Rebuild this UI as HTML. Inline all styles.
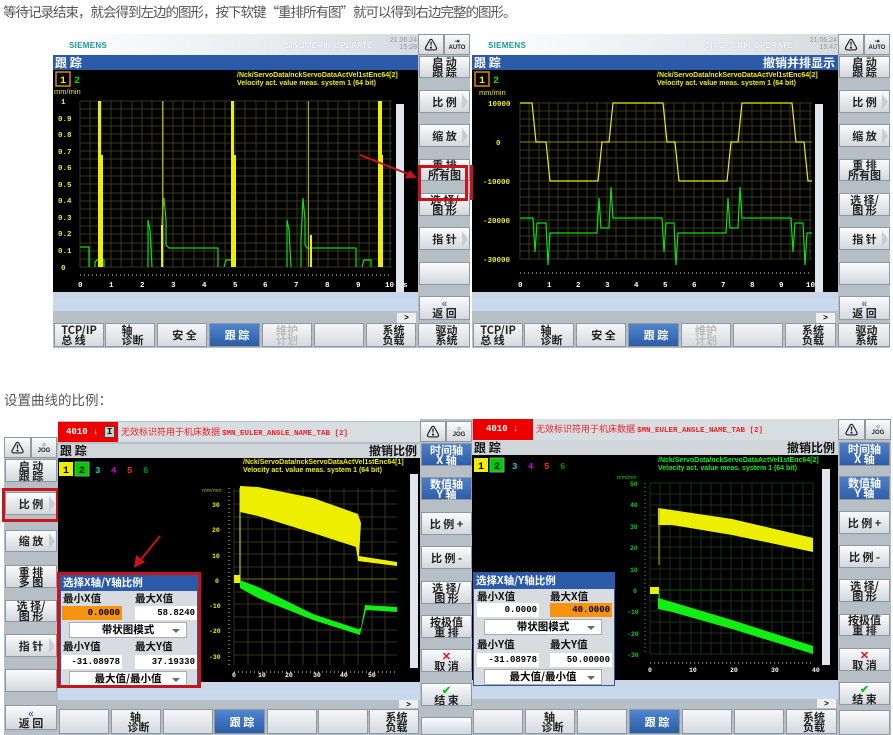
<!DOCTYPE html>
<html><head><meta charset="utf-8"><style>
*{margin:0;padding:0;box-sizing:border-box}
body{width:893px;height:735px;background:#fff;position:relative;overflow:hidden;font-family:"Liberation Sans","Noto Sans CJK SC",sans-serif}
.a{position:absolute}
.cap{position:absolute;font-size:13.5px;color:#555;white-space:nowrap;font-family:"Noto Sans CJK SC",sans-serif}
.hdr{background:linear-gradient(90deg,#fff 0%,#e8ecef 60%,#d5dbe0 100%)}
.sie{position:absolute;font:bold 8px "Liberation Sans",sans-serif;color:#1a9a9a;letter-spacing:.3px}
.so{position:absolute;font:8px "Liberation Sans",sans-serif;color:#fff;letter-spacing:.2px}
.dt{position:absolute;font:7px "Liberation Sans",sans-serif;color:#999;text-align:right;line-height:7px}
.col{position:absolute;background:#b6bec6}
.sk{position:absolute;background:linear-gradient(#fafbfc,#d3d8dd);border:1px solid #8f989f;font:bold 11px "Noto Sans CJK SC",sans-serif;color:#222;text-align:center;display:flex;align-items:center;justify-content:center;line-height:10px}
.skb{background:linear-gradient(#4f7fc8,#2f5ea8);color:#fff}
.tri{position:absolute;right:1px;top:50%;margin-top:-8px;width:0;height:0;border-left:6px solid #c7cdd3;border-top:8px solid transparent;border-bottom:8px solid transparent}
.blk{position:absolute;background:#000}
.ttl{position:absolute;background:#2b5aa8;color:#fff;font:bold 12px "Noto Sans CJK SC",sans-serif;padding-left:2px;line-height:15px}
.ttlg{background:#d0d5da;color:#111}
.bb{position:absolute;background:linear-gradient(#f5f6f7,#d6dbe0);border:1px solid #8f989f;font:bold 11px "Noto Sans CJK SC",sans-serif;color:#222;display:flex;align-items:center;justify-content:center;line-height:10px}
.bbb{background:linear-gradient(#4f86cf,#2c5ca6);color:#fff}
.path{position:absolute;font:bold 7px "Liberation Sans",sans-serif;color:#ee0;line-height:8px;white-space:nowrap}
.lbl{font:bold 7px "Liberation Mono",monospace}
.dlg{position:absolute;background:#d8dce0;border:1px solid #2b5aa8}
.dlg .h{background:#2b5aa8;color:#fff;font:bold 10.5px "Noto Sans CJK SC",sans-serif;height:16px;line-height:16px;padding-left:2px}
.dlg .t{position:absolute;font:bold 10.5px "Noto Sans CJK SC",sans-serif;color:#111}
.dlg .f{position:absolute;background:#fff;font:bold 9px "Liberation Mono",monospace;text-align:right;padding-right:2px;line-height:14px;height:14px}
.dlg .o{background:#f7940f}
.dlg .dd{position:absolute;background:#fff;border:1px solid #aab;font:bold 10.5px "Noto Sans CJK SC",sans-serif;text-align:center;line-height:14px;height:16px}
.dlg .dd:after{content:"";position:absolute;right:6px;top:6px;border-left:4px solid transparent;border-right:4px solid transparent;border-top:4px solid #667}
.alm{position:absolute;background:#e00;color:#fff;font:bold 9px "Liberation Mono",monospace;line-height:20px}
.almt{position:absolute;background:#d8dde2;color:#e22;font:9px "Noto Sans CJK SC",sans-serif;line-height:20px;white-space:nowrap}
</style></head><body>

<div class="cap" style="left:3px;top:1px;letter-spacing:-1px">等待记录结束，就会得到左边的图形，按下软键“重排所有图”就可以得到右边完整的图形。</div>
<div class="cap" style="left:4px;top:389px">设置曲线的比例：</div>

<!-- ============ PANEL 1 ============ -->
<div class="a hdr" style="left:53px;top:34px;width:365px;height:21px"></div>
<div class="sie" style="left:69px;top:41px">SIEMENS</div>
<div class="so" style="left:285px;top:41px;color:#fff;text-shadow:0 0 1px #aab">SINUMERIK OPERATE</div>
<div class="dt" style="left:380px;top:37px;width:37px">21.06.24<br>15:28</div>
<div class="ttl" style="left:53px;top:55px;width:365px;height:15px">跟 踪</div>
<div class="blk" style="left:53px;top:70px;width:365px;height:222px"></div>
<div class="a" style="left:53px;top:292px;width:365px;height:7px;background:#c9d6e8"></div>
<div class="a" style="left:53px;top:299px;width:365px;height:12px;background:#c8d9ee"></div>
<div class="a" style="left:53px;top:311px;width:365px;height:12px;background:#b6bec6"></div>
<div class="a" style="left:397px;top:313px;width:19px;height:10px;background:#eee;font:bold 8px sans-serif;text-align:center">&gt;</div>
<svg class="a" style="left:53px;top:70px" width="365" height="222">
 <rect x="3" y="2" width="14" height="14" fill="none" stroke="#e08a00" stroke-width="1.5"/>
 <text x="7" y="13" fill="#ee0" class="lbl" style="font-size:10px">1</text>
 <text x="21" y="13" fill="#0d0" class="lbl" style="font-size:10px">2</text>
 <text x="1" y="24" fill="#ee0" font-size="7.5" font-family="Liberation Sans">mm/min</text>
 <g stroke="#3a3a1c" stroke-width="1">
  <path d="M27 31V197M37 31V197M48 31V197M58 31V197M68 31V197M79 31V197M89 31V197M99 31V197M110 31V197M120 31V197M130 31V197M141 31V197M151 31V197M161 31V197M172 31V197M182 31V197M192 31V197M203 31V197M213 31V197M223 31V197M234 31V197M244 31V197M254 31V197M265 31V197M275 31V197M285 31V197M296 31V197M306 31V197M316 31V197M327 31V197M337 31V197"/>
  <path d="M27 31H339M27 39H339M27 48H339M27 56H339M27 64H339M27 73H339M27 81H339M27 89H339M27 98H339M27 106H339M27 114H339M27 123H339M27 131H339M27 139H339M27 148H339M27 156H339M27 164H339M27 173H339M27 181H339M27 189H339M27 197H339"/>
 </g>
 <g fill="#ee0" font-size="7.5" font-family="Liberation Mono" font-weight="bold">
  <text x="8" y="34">1</text><text x="5" y="51">0.9</text><text x="5" y="67">0.8</text><text x="5" y="84">0.7</text><text x="5" y="100">0.6</text><text x="5" y="117">0.5</text><text x="5" y="133">0.4</text><text x="5" y="150">0.3</text><text x="5" y="166">0.2</text><text x="5" y="183">0.1</text><text x="8" y="200">0</text>
 </g>
 <g fill="#fff" font-size="7.5" font-family="Liberation Mono" font-weight="bold">
  <text x="25" y="217">0</text><text x="56" y="217">1</text><text x="87" y="217">2</text><text x="118" y="217">3</text><text x="149" y="217">4</text><text x="180" y="217">5</text><text x="210" y="217">6</text><text x="241" y="217">7</text><text x="272" y="217">8</text><text x="303" y="217">9</text><text x="332" y="217">10</text><text x="350" y="217">s</text>
 </g>
 <path d="M27 205H339" stroke="#ee0" stroke-dasharray="1 3"/>
 <g stroke="#1d1" fill="none" stroke-width="1.2">
  <path d="M27 177H36V197M42 197V192L44 190H51V197"/>
  <path d="M95 197V150L97 160L99 197M109 197V150L111 128L113 150V175L116 178H165V197M171 197L173 190H180V197"/>
  <path d="M234 197V150L236 160L238 197M248 197V170L250 128L252 150V175L254 178H303V197M309 197L311 190H318V197"/>
 </g>
 <g fill="#ee0">
  <rect x="45" y="31" width="3" height="166"/><rect x="47" y="85" width="3" height="112"/>
  <rect x="109" y="31" width="1.5" height="166" fill="#aa0"/>
  <rect x="108" y="155" width="2" height="42"/>
  <rect x="178" y="31" width="3" height="166"/><rect x="180" y="85" width="3" height="112"/>
  <rect x="255" y="31" width="1" height="166" fill="#aa0"/>
  <rect x="257" y="165" width="2" height="32"/>
  <rect x="325" y="31" width="4" height="166"/><rect x="328" y="85" width="2" height="112"/>
 </g>
 <rect x="343" y="34" width="8" height="188" fill="#dfe6ee"/>
</svg>
<div class="path" style="left:237px;top:72px">/Nck/ServoData/nckServoDataActVel1stEnc64[2]<br>Velocity act. value meas. system 1 (64 bit)</div>
<div class="col" style="left:418px;top:34px;width:52px;height:313px"></div>
<div class="sk" style="left:418px;top:34px;width:26px;height:21px;font-size:13px">⚠</div>
<div class="sk" style="left:444px;top:34px;width:26px;height:21px;font:bold 6px sans-serif">⇥<br>AUTO</div>
<div class="sk" style="left:419px;top:56px;width:51px;height:22px">启 动<br>跟 踪</div>
<div class="sk" style="left:419px;top:90px;width:51px;height:23px">比 例<span class="tri"></span></div>
<div class="sk" style="left:419px;top:124px;width:51px;height:23px">缩 放<span class="tri"></span></div>
<div class="sk" style="left:419px;top:159px;width:51px;height:22px">重 排<br>所有图</div>
<div class="sk" style="left:419px;top:193px;width:51px;height:23px">选 择/<br>图 形</div>
<div class="sk" style="left:419px;top:227px;width:51px;height:23px">指 针<span class="tri"></span></div>
<div class="sk" style="left:419px;top:262px;width:51px;height:23px"></div>
<div class="sk" style="left:419px;top:296px;width:51px;height:24px;color:#222"><span><span style="color:#36c">«</span><br>返 回</span></div>
<div class="a" style="left:418px;top:165px;width:50px;height:36px;border:3px solid #c8141a"></div>
<svg class="a" style="left:355px;top:150px" width="65" height="35"><path d="M5 5L58 26" stroke="#c8141a" stroke-width="2"/><path d="M62 28L50 28L55 20Z" fill="#c8141a"/></svg>
<div class="a" style="left:53px;top:323px;width:417px;height:25px;background:#b6bec6"></div>
<div class="bb" style="left:54px;top:323px;width:50px;height:24px">TCP/IP<br>总 线</div>
<div class="bb" style="left:105px;top:323px;width:50px;height:24px">&nbsp;&nbsp;轴<br>&nbsp;&nbsp;诊断</div>
<div class="bb" style="left:157px;top:323px;width:50px;height:24px">&nbsp;&nbsp;安 全</div>
<div class="bb bbb" style="left:209px;top:323px;width:51px;height:24px">&nbsp;&nbsp;跟 踪</div>
<div class="bb" style="left:262px;top:323px;width:50px;height:24px;color:#bbb">维护<br>计划</div>
<div class="bb" style="left:314px;top:323px;width:50px;height:24px"></div>
<div class="bb" style="left:366px;top:323px;width:50px;height:24px">&nbsp;&nbsp;系统<br>&nbsp;&nbsp;负载</div>
<div class="bb" style="left:418px;top:323px;width:52px;height:24px">&nbsp;&nbsp;驱动<br>&nbsp;&nbsp;系统</div>

<!-- ============ PANEL 2 ============ -->
<div class="a hdr" style="left:472px;top:34px;width:366px;height:21px"></div>
<div class="sie" style="left:488px;top:41px">SIEMENS</div>
<div class="so" style="left:705px;top:41px;text-shadow:0 0 1px #aab">SINUMERIK OPERATE</div>
<div class="dt" style="left:800px;top:37px;width:37px">21.06.24<br>15:47</div>
<div class="ttl" style="left:472px;top:55px;width:366px;height:15px">跟 踪<span style="position:absolute;right:3px">撤销并排显示</span></div>
<div class="blk" style="left:472px;top:70px;width:366px;height:222px"></div>
<div class="a" style="left:472px;top:292px;width:366px;height:7px;background:#c9d6e8"></div>
<div class="a" style="left:472px;top:299px;width:366px;height:12px;background:#c8d9ee"></div>
<div class="a" style="left:472px;top:311px;width:366px;height:12px;background:#b6bec6"></div>
<div class="a" style="left:816px;top:313px;width:19px;height:10px;background:#eee;font:bold 8px sans-serif;text-align:center">&gt;</div>
<svg class="a" style="left:472px;top:70px" width="366" height="222">
 <rect x="3" y="2" width="14" height="14" fill="none" stroke="#e08a00" stroke-width="1.5"/>
 <text x="7" y="13" fill="#ee0" class="lbl" style="font-size:10px">1</text>
 <text x="21" y="13" fill="#0d0" class="lbl" style="font-size:10px">2</text>
 <text x="7" y="25" fill="#ee0" font-size="7.5" font-family="Liberation Sans">mm/min</text>
 <g stroke="#3a3a1c" stroke-width="1">
  <path d="M48 33V189M57 33V189M67 33V189M77 33V189M86 33V189M96 33V189M106 33V189M115 33V189M125 33V189M135 33V189M144 33V189M154 33V189M164 33V189M173 33V189M183 33V189M193 33V189M202 33V189M212 33V189M222 33V189M231 33V189M241 33V189M251 33V189M260 33V189M270 33V189M280 33V189M289 33V189M299 33V189M309 33V189M318 33V189M328 33V189M338 33V189"/>
  <path d="M48 33H340M48 41H340M48 49H340M48 56H340M48 64H340M48 72H340M48 80H340M48 88H340M48 96H340M48 103H340M48 111H340M48 119H340M48 127H340M48 135H340M48 142H340M48 150H340M48 158H340M48 166H340M48 174H340M48 181H340M48 189H340"/>
 </g>
 <g fill="#ee0" font-size="7.5" font-family="Liberation Mono" font-weight="bold">
  <text x="16" y="36">10000</text><text x="24" y="75">0</text><text x="11" y="114">-10000</text><text x="11" y="153">-20000</text><text x="11" y="192">-30000</text>
 </g>
 <g fill="#fff" font-size="7.5" font-family="Liberation Mono" font-weight="bold">
  <text x="46" y="217">0</text><text x="75" y="217">1</text><text x="104" y="217">2</text><text x="133" y="217">3</text><text x="162" y="217">4</text><text x="191" y="217">5</text><text x="220" y="217">6</text><text x="249" y="217">7</text><text x="278" y="217">8</text><text x="307" y="217">9</text><text x="334" y="217">10</text>
 </g>
 <path d="M48 72H340" stroke="#aa0" stroke-width="0.8"/>
 <path d="M48 203H340" stroke="#ee0" stroke-dasharray="1 3"/>
 <path fill="none" stroke="#ee0" stroke-width="1.2" d="M48 33H60L64 72H74L78 111H126L130 72H137L141 33H191L195 72H203L207 111H255L259 72H266L270 33H320L324 72H332L336 111H340"/>
 <path fill="none" stroke="#1d1" stroke-width="1.2" d="M48 148H61L63 182L65 153H74L76 195L78 163H125L127 128L129 158H137L139 117L141 148H190L192 182L194 153H202L204 195L206 163H254L256 128L258 158H266L268 117L270 148H319L321 182L323 153H331L333 195L335 163H340"/>
 <rect x="343" y="34" width="8" height="188" fill="#dfe6ee"/>
</svg>
<div class="path" style="left:657px;top:72px">/Nck/ServoData/nckServoDataActVel1stEnc64[2]<br>Velocity act. value meas. system 1 (64 bit)</div>
<div class="a" style="left:470px;top:165px;width:3px;height:35px;background:#c8141a"></div>
<div class="col" style="left:838px;top:34px;width:52px;height:313px"></div>
<div class="sk" style="left:838px;top:34px;width:26px;height:21px;font-size:13px">⚠</div>
<div class="sk" style="left:864px;top:34px;width:26px;height:21px;font:bold 6px sans-serif">⇥<br>AUTO</div>
<div class="sk" style="left:839px;top:56px;width:51px;height:22px">启 动<br>跟 踪</div>
<div class="sk" style="left:839px;top:90px;width:51px;height:23px">比 例<span class="tri"></span></div>
<div class="sk" style="left:839px;top:124px;width:51px;height:23px">缩 放<span class="tri"></span></div>
<div class="sk" style="left:839px;top:159px;width:51px;height:22px">重 排<br>所有图</div>
<div class="sk" style="left:839px;top:193px;width:51px;height:23px">选 择/<br>图 形</div>
<div class="sk" style="left:839px;top:227px;width:51px;height:23px">指 针<span class="tri"></span></div>
<div class="sk" style="left:839px;top:262px;width:51px;height:23px"></div>
<div class="sk" style="left:839px;top:296px;width:51px;height:24px"><span><span style="color:#36c">«</span><br>返 回</span></div>
<div class="a" style="left:472px;top:323px;width:418px;height:25px;background:#b6bec6"></div>
<div class="bb" style="left:473px;top:323px;width:50px;height:24px">TCP/IP<br>总 线</div>
<div class="bb" style="left:524px;top:323px;width:50px;height:24px">&nbsp;&nbsp;轴<br>&nbsp;&nbsp;诊断</div>
<div class="bb" style="left:576px;top:323px;width:50px;height:24px">&nbsp;&nbsp;安 全</div>
<div class="bb bbb" style="left:628px;top:323px;width:51px;height:24px">&nbsp;&nbsp;跟 踪</div>
<div class="bb" style="left:681px;top:323px;width:50px;height:24px;color:#bbb">维护<br>计划</div>
<div class="bb" style="left:733px;top:323px;width:50px;height:24px"></div>
<div class="bb" style="left:785px;top:323px;width:51px;height:24px">&nbsp;&nbsp;系统<br>&nbsp;&nbsp;负载</div>
<div class="bb" style="left:838px;top:323px;width:52px;height:24px">&nbsp;&nbsp;驱动<br>&nbsp;&nbsp;系统</div>

<!-- ============ PANEL 3 ============ -->
<div class="col" style="left:4px;top:437px;width:54px;height:298px"></div>
<div class="sk" style="left:4px;top:437px;width:27px;height:21px;font-size:13px">⚠</div>
<div class="sk" style="left:31px;top:437px;width:26px;height:21px;font:bold 6px sans-serif">☼<br>JOG</div>
<div class="sk" style="left:5px;top:459px;width:52px;height:23px">启 动<br>跟 踪</div>
<div class="sk" style="left:5px;top:492px;width:52px;height:23px">比 例<span class="tri"></span></div>
<div class="sk" style="left:5px;top:530px;width:52px;height:22px">缩 放<span class="tri"></span></div>
<div class="sk" style="left:5px;top:565px;width:52px;height:23px">重 排<br>多 图</div>
<div class="sk" style="left:5px;top:600px;width:52px;height:22px">选 择/<br>图 形</div>
<div class="sk" style="left:5px;top:634px;width:52px;height:23px">指 针<span class="tri"></span></div>
<div class="sk" style="left:5px;top:669px;width:52px;height:23px"></div>
<div class="sk" style="left:5px;top:705px;width:52px;height:25px"><span><span style="color:#36c">«</span><br>返 回</span></div>
<div class="a" style="left:2px;top:488px;width:57px;height:34px;border:3px solid #c8141a"></div>

<div class="a" style="left:58px;top:421px;width:362px;height:314px;background:#b6bec6"></div>
<div class="alm" style="left:58px;top:422px;width:60px;height:20px;padding-left:8px">4010 <b>↓</b> <span style="background:#ccc;color:#000;padding:0 2px;border:1px solid #444">I</span></div>
<div class="almt" style="left:118px;top:422px;width:302px;height:20px;padding-left:3px">无效标识符用于机床数据 <b style="font-family:Liberation Mono;font-size:7.5px">$MN_EULER_ANGLE_NAME_TAB [2]</b></div>
<div class="ttl ttlg" style="left:58px;top:444px;width:362px;height:14px;line-height:14px">跟 踪<span style="position:absolute;right:3px">撤销比例</span></div>
<div class="blk" style="left:58px;top:458px;width:362px;height:224px"></div>
<div class="a" style="left:58px;top:682px;width:362px;height:7px;background:#c9d6e8"></div>
<div class="a" style="left:58px;top:689px;width:362px;height:11px;background:#c8d9ee"></div>
<div class="a" style="left:399px;top:700px;width:19px;height:9px;background:#eee;font:bold 8px sans-serif;text-align:center">&gt;</div>
<svg class="a" style="left:58px;top:458px" width="362" height="224">
 <rect x="1" y="4" width="14" height="14" fill="#ee0"/><text x="5" y="15" font-size="10" font-weight="bold" font-family="Liberation Mono">1</text>
 <rect x="17" y="4" width="14" height="14" fill="#0c0" stroke="#6a8" /><text x="21" y="15" font-size="10" font-weight="bold" font-family="Liberation Mono">2</text>
 <text x="37" y="15" fill="#0cc" font-size="9" font-family="Liberation Mono" font-weight="bold">3</text>
 <text x="53" y="15" fill="#d0d" font-size="9" font-family="Liberation Mono" font-weight="bold">4</text>
 <text x="69" y="15" fill="#f22" font-size="9" font-family="Liberation Mono" font-weight="bold">5</text>
 <text x="85" y="15" fill="#080" font-size="9" font-family="Liberation Mono" font-weight="bold">6</text>
 <text x="144" y="34" fill="#aa0" font-size="5.5" font-family="Liberation Sans">mm/min</text>
 <g stroke="#333318"><path d="M176 30V207M190 30V207M204 30V207M217 30V207M231 30V207M245 30V207M259 30V207M272 30V207M286 30V207M300 30V207M314 30V207M327 30V207"/>
 <path d="M176 33H339M176 46H339M176 59H339M176 71H339M176 84H339M176 96H339M176 109H339M176 121H339M176 134H339M176 146H339M176 159H339M176 172H339M176 184H339M176 197H339"/></g>
 <path d="M176 121H339" stroke="#880" stroke-width="0.8"/>
 <path d="M171 30V207" stroke="#ee0" stroke-dasharray="1 3"/>
 <g fill="#ee0" font-size="6.5" font-family="Liberation Mono" font-weight="bold">
  <text x="154" y="49">30</text><text x="154" y="74">20</text><text x="154" y="100">10</text><text x="157" y="125">0</text><text x="151" y="150">-10</text><text x="151" y="175">-20</text><text x="151" y="201">-30</text>
 </g>
 <g fill="#fff" font-size="6.5" font-family="Liberation Mono" font-weight="bold">
  <text x="174" y="219">0</text><text x="200" y="219">10</text><text x="227" y="219">20</text><text x="255" y="219">30</text><text x="282" y="219">40</text><text x="310" y="219">50</text>
 </g>
 <path d="M176 214H339" stroke="#ee0" stroke-dasharray="1 3"/>
 <path fill="#ee0" d="M182 28L200 29L255 40L300 56L303 65L301 98L339 104L339 108L300 103L298 89L255 75L200 58L182 54Z"/>
 <rect x="176" y="117" width="6" height="8" fill="#ee0"/>
 <path d="M182 30V125" stroke="#ee0"/>
 <path fill="#1e1" d="M182 122L200 129L255 156L300 171L303 170L307 147L339 149L339 154L308 152L302 177L255 162L200 140L182 130Z"/>
 <rect x="352" y="16" width="8" height="194" fill="#dfe6ee"/>
</svg>
<div class="path" style="left:243px;top:459px">/Nck/ServoData/nckServoDataActVel1stEnc64[1]<br>Velocity act. value meas. system 1 (64 bit)</div>
<svg class="a" style="left:130px;top:533px" width="35" height="40"><path d="M30 3L8 30" stroke="#c8141a" stroke-width="2"/><path d="M4 35L6 22L15 29Z" fill="#c8141a"/></svg>
<div class="dlg" style="left:60px;top:574px;width:138px;height:112px">
 <div class="h">选择X轴/Y轴比例</div>
 <div class="t" style="left:2px;top:16px">最小X值</div><div class="t" style="left:74px;top:16px">最大X值</div>
 <div class="f o" style="left:1px;top:31px;width:60px">0.0000</div><div class="f" style="left:74px;top:31px;width:62px">58.8240</div>
 <div class="dd" style="left:8px;top:47px;width:118px">带状图模式</div>
 <div class="t" style="left:2px;top:64px">最小Y值</div><div class="t" style="left:74px;top:64px">最大Y值</div>
 <div class="f" style="left:1px;top:80px;width:60px">-31.08978</div><div class="f" style="left:74px;top:80px;width:62px">37.19330</div>
 <div class="dd" style="left:8px;top:96px;width:118px">最大值/最小值</div>
</div>
<div class="a" style="left:57px;top:572px;width:144px;height:116px;border:3px solid #c8141a"></div>
<div class="a" style="left:58px;top:708px;width:362px;height:27px;background:#b6bec6"></div>
<div class="bb" style="left:59px;top:709px;width:50px;height:25px"></div>
<div class="bb" style="left:111px;top:709px;width:50px;height:25px">&nbsp;&nbsp;&nbsp;轴<br>&nbsp;&nbsp;诊断</div>
<div class="bb" style="left:163px;top:709px;width:50px;height:25px"></div>
<div class="bb bbb" style="left:214px;top:709px;width:51px;height:25px">&nbsp;&nbsp;跟 踪</div>
<div class="bb" style="left:267px;top:709px;width:50px;height:25px"></div>
<div class="bb" style="left:318px;top:709px;width:50px;height:25px"></div>
<div class="bb" style="left:369px;top:709px;width:50px;height:25px">&nbsp;&nbsp;系统<br>&nbsp;&nbsp;负载</div>
<div class="col" style="left:420px;top:419px;width:52px;height:316px"></div>
<div class="sk" style="left:420px;top:421px;width:26px;height:21px;font-size:13px">⚠</div>
<div class="sk" style="left:446px;top:421px;width:26px;height:21px;font:bold 6px sans-serif">☼<br>JOG</div>
<div class="sk skb" style="left:421px;top:443px;width:51px;height:23px">时间轴<br>X 轴</div>
<div class="sk skb" style="left:421px;top:477px;width:51px;height:23px">数值轴<br>Y 轴</div>
<div class="sk" style="left:421px;top:512px;width:51px;height:23px">比 例 +</div>
<div class="sk" style="left:421px;top:546px;width:51px;height:23px">比 例 -</div>
<div class="sk" style="left:421px;top:581px;width:51px;height:23px">选 择/<br>图 形</div>
<div class="sk" style="left:421px;top:615px;width:51px;height:23px">按极值<br>重 排</div>
<div class="sk" style="left:421px;top:649px;width:51px;height:23px"><span><span style="color:#e11">✕</span><br>取 消</span></div>
<div class="sk" style="left:421px;top:683px;width:51px;height:23px"><span><span style="color:#2b2">✔</span><br>结 束</span></div>
<div class="sk" style="left:421px;top:717px;width:51px;height:18px"></div>

<!-- ============ PANEL 4 ============ -->
<div class="a" style="left:472px;top:419px;width:366px;height:316px;background:#b6bec6"></div>
<div class="alm" style="left:473px;top:419px;width:60px;height:21px;padding-left:13px">4010 <b>↓</b> <span style="background:#ccc;color:#000;padding:0 2px;border:1px solid #444">I</span></div>
<div class="almt" style="left:533px;top:419px;width:305px;height:21px;padding-left:3px">无效标识符用于机床数据 <b style="font-family:Liberation Mono;font-size:7.5px">$MN_EULER_ANGLE_NAME_TAB [2]</b></div>
<div class="ttl ttlg" style="left:472px;top:440px;width:366px;height:15px">跟 踪<span style="position:absolute;right:3px">撤销比例</span></div>
<div class="blk" style="left:472px;top:455px;width:366px;height:225px"></div>
<div class="a" style="left:472px;top:680px;width:366px;height:8px;background:#c9d6e8"></div>
<div class="a" style="left:472px;top:688px;width:366px;height:11px;background:#c8d9ee"></div>
<div class="a" style="left:817px;top:699px;width:19px;height:9px;background:#eee;font:bold 8px sans-serif;text-align:center">&gt;</div>
<svg class="a" style="left:472px;top:455px" width="366" height="225">
 <rect x="2" y="3" width="14" height="14" fill="#ee0"/><text x="6" y="14" font-size="10" font-weight="bold" font-family="Liberation Mono">1</text>
 <rect x="18" y="3" width="14" height="14" fill="#0c0" stroke="#6a8"/><text x="22" y="14" font-size="10" font-weight="bold" font-family="Liberation Mono">2</text>
 <text x="40" y="14" fill="#0cc" font-size="9" font-family="Liberation Mono" font-weight="bold">3</text>
 <text x="56" y="14" fill="#d0d" font-size="9" font-family="Liberation Mono" font-weight="bold">4</text>
 <text x="72" y="14" fill="#f22" font-size="9" font-family="Liberation Mono" font-weight="bold">5</text>
 <text x="88" y="14" fill="#080" font-size="9" font-family="Liberation Mono" font-weight="bold">6</text>
 <text x="145" y="24" fill="#1c1" font-size="5.5" font-family="Liberation Sans">mm/min</text>
 <g stroke="#1a301a"><path d="M178 28V199M188 28V199M198 28V199M208 28V199M219 28V199M229 28V199M239 28V199M249 28V199M259 28V199M270 28V199M280 28V199M290 28V199M300 28V199M310 28V199M321 28V199M331 28V199M341 28V199"/>
 <path d="M178 28H341M178 39H341M178 50H341M178 60H341M178 71H341M178 82H341M178 92H341M178 103H341M178 114H341M178 124H341M178 135H341M178 146H341M178 156H341M178 167H341M178 178H341M178 188H341M178 199H341"/></g>
 <path d="M178 135H341" stroke="#160" stroke-width="0.8"/>
 <path d="M173 28V199" stroke="#1c1" stroke-dasharray="1 3"/>
 <g fill="#1c1" font-size="6.5" font-family="Liberation Mono" font-weight="bold">
  <text x="158" y="31">50</text><text x="158" y="52">40</text><text x="158" y="74">30</text><text x="158" y="95">20</text><text x="158" y="117">10</text><text x="161" y="138">0</text><text x="155" y="159">-10</text><text x="155" y="181">-20</text><text x="155" y="202">-30</text>
 </g>
 <g fill="#fff" font-size="6.5" font-family="Liberation Mono" font-weight="bold">
  <text x="176" y="217">0</text><text x="217" y="217">10</text><text x="258" y="217">20</text><text x="299" y="217">30</text><text x="340" y="217">40</text>
 </g>
 <path d="M178 208H341" stroke="#ee0" stroke-dasharray="1 3"/>
 <path fill="#ee0" d="M186 53L200 55L260 64L341 83L341 97L260 80L200 70L186 70Z"/>
 <path d="M187 53V110" stroke="#aa0"/>
 <rect x="178" y="132" width="9" height="7" fill="#ee0"/>
 <path fill="#1e1" d="M186 143L200 147L260 165L341 191L341 199L260 174L200 157L186 154Z"/>
 <path d="M187 138V152" stroke="#1e1"/>
 <rect x="350" y="14" width="8" height="196" fill="#dfe6ee"/>
</svg>
<div class="path" style="left:658px;top:457px;color:#1e1">/Nck/ServoData/nckServoDataActVel1stEnc64[2]<br>Velocity act. value meas. system 1 (64 bit)</div>
<div class="dlg" style="left:473px;top:572px;width:142px;height:114px">
 <div class="h">选择X轴/Y轴比例</div>
 <div class="t" style="left:3px;top:16px">最小X值</div><div class="t" style="left:76px;top:16px">最大X值</div>
 <div class="f" style="left:3px;top:30px;width:62px">0.0000</div><div class="f o" style="left:76px;top:30px;width:62px">40.0000</div>
 <div class="dd" style="left:10px;top:46px;width:118px">带状图模式</div>
 <div class="t" style="left:3px;top:64px">最小Y值</div><div class="t" style="left:76px;top:64px">最大Y值</div>
 <div class="f" style="left:3px;top:80px;width:62px">-31.08978</div><div class="f" style="left:76px;top:80px;width:62px">50.00000</div>
 <div class="dd" style="left:10px;top:96px;width:118px">最大值/最小值</div>
</div>
<div class="a" style="left:472px;top:708px;width:366px;height:27px;background:#b6bec6"></div>
<div class="bb" style="left:473px;top:709px;width:50px;height:25px"></div>
<div class="bb" style="left:525px;top:709px;width:50px;height:25px">&nbsp;&nbsp;&nbsp;轴<br>&nbsp;&nbsp;诊断</div>
<div class="bb" style="left:577px;top:709px;width:50px;height:25px"></div>
<div class="bb bbb" style="left:629px;top:709px;width:51px;height:25px">&nbsp;&nbsp;跟 踪</div>
<div class="bb" style="left:682px;top:709px;width:50px;height:25px"></div>
<div class="bb" style="left:734px;top:709px;width:50px;height:25px"></div>
<div class="bb" style="left:786px;top:709px;width:51px;height:25px">&nbsp;&nbsp;系统<br>&nbsp;&nbsp;负载</div>
<div class="col" style="left:838px;top:419px;width:53px;height:316px"></div>
<div class="sk" style="left:838px;top:419px;width:27px;height:21px;font-size:13px">⚠</div>
<div class="sk" style="left:865px;top:419px;width:26px;height:21px;font:bold 6px sans-serif">☼<br>JOG</div>
<div class="sk skb" style="left:839px;top:442px;width:51px;height:24px">时间轴<br>X 轴</div>
<div class="sk skb" style="left:839px;top:476px;width:51px;height:24px">数值轴<br>Y 轴</div>
<div class="sk" style="left:839px;top:511px;width:51px;height:23px">比 例 +</div>
<div class="sk" style="left:839px;top:545px;width:51px;height:23px">比 例 -</div>
<div class="sk" style="left:839px;top:579px;width:51px;height:23px">选 择/<br>图 形</div>
<div class="sk" style="left:839px;top:614px;width:51px;height:22px">按极值<br>重 排</div>
<div class="sk" style="left:839px;top:648px;width:51px;height:23px"><span><span style="color:#e11">✕</span><br>取 消</span></div>
<div class="sk" style="left:839px;top:682px;width:51px;height:23px"><span><span style="color:#2b2">✔</span><br>结 束</span></div>
<div class="sk" style="left:839px;top:710px;width:51px;height:25px"></div>
</body></html>
